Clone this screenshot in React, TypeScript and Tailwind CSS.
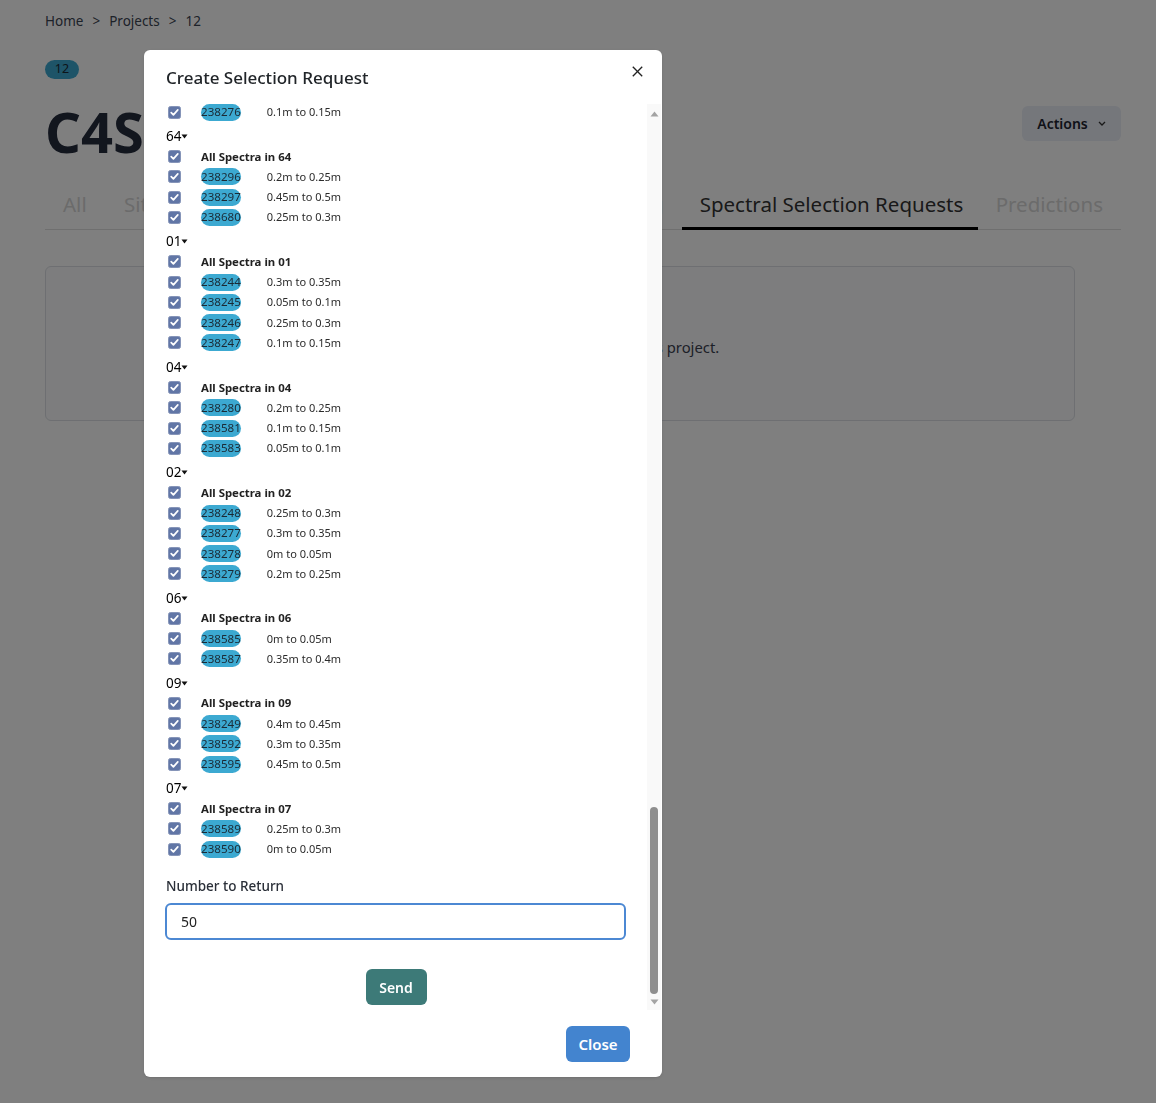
import React from "react";

type Item = [string, string];
type Group = { label: string | null; items: Item[] };

const groups: Group[] = [
  { label: null, items: [["238276", "0.1m to 0.15m"]] },
  { label: "64", items: [["238296", "0.2m to 0.25m"], ["238297", "0.45m to 0.5m"], ["238680", "0.25m to 0.3m"]] },
  { label: "01", items: [["238244", "0.3m to 0.35m"], ["238245", "0.05m to 0.1m"], ["238246", "0.25m to 0.3m"], ["238247", "0.1m to 0.15m"]] },
  { label: "04", items: [["238280", "0.2m to 0.25m"], ["238581", "0.1m to 0.15m"], ["238583", "0.05m to 0.1m"]] },
  { label: "02", items: [["238248", "0.25m to 0.3m"], ["238277", "0.3m to 0.35m"], ["238278", "0m to 0.05m"], ["238279", "0.2m to 0.25m"]] },
  { label: "06", items: [["238585", "0m to 0.05m"], ["238587", "0.35m to 0.4m"]] },
  { label: "09", items: [["238249", "0.4m to 0.45m"], ["238592", "0.3m to 0.35m"], ["238595", "0.45m to 0.5m"]] },
  { label: "07", items: [["238589", "0.25m to 0.3m"], ["238590", "0m to 0.05m"]] },
];

function Check() {
  return (
    <svg width="13" height="13" viewBox="0 0 13 13" className="shrink-0">
      <rect x="0.5" y="0.5" width="12" height="12" rx="2" fill="#6176a6" stroke="#8594b8" />
      <polyline points="3.2,6.6 5.4,8.9 9.8,3.9" fill="none" stroke="#fff" strokeWidth="1.7" strokeLinecap="round" strokeLinejoin="round" />
    </svg>
  );
}

function Row({ id, range }: { id: string; range: string }) {
  return (
    <div className="flex h-[20.25px] items-center pl-[2px]">
      <Check />
      <span className="ml-[20px] inline-flex h-[17px] items-center rounded-full bg-[#3ca9d1] text-[11.6px] leading-[14px] text-[#1b2a35]">{id}</span>
      <span className="ml-[26px] inline-block text-[11px] leading-[14px] text-[#2b2b2b]">{range}</span>
    </div>
  );
}

function AllRow({ label }: { label: string }) {
  return (
    <div className="flex h-[20.25px] items-center pl-[2px]">
      <Check />
      <span className="ml-[20px] text-[11.4px] font-bold leading-[14px] text-[#222]">All Spectra in {label}</span>
    </div>
  );
}

function GroupLabel({ label }: { label: string }) {
  return (
    <div className="flex h-[24.3px] items-center pt-[3px] text-[13.5px] leading-[18px] text-black">
      <span>{label}</span>
      <svg width="7" height="5" viewBox="0 0 7 5" className="mt-[1px]">
        <polygon points="0.5,0.5 6.5,0.5 3.5,4.5" fill="#111" />
      </svg>
    </div>
  );
}

const tabBase = "-mb-px border-b-[3px] px-[18px] pb-[8px] whitespace-nowrap";

export default function App() {
  const font = { fontFamily: '"Noto Sans", "Open Sans", Arial, sans-serif' };
  return (
    <div className="relative min-h-[1103px] w-full bg-white text-[#212529]" style={font}>
      {/* Background page */}
      <div className="pl-[45px] pr-[35px] pt-[12px]">
        <div className="flex items-center gap-[9px] text-[13.5px] leading-[18px] text-[#3b4452]">
          <span>Home</span>
          <span>&gt;</span>
          <span>Projects</span>
          <span>&gt;</span>
          <span>12</span>
        </div>
        <div className="mt-[30px] flex h-[19px] w-[34px] items-center justify-center rounded-full bg-[#3ca9d1] text-[12.5px] text-[#1b2a35]">
          12
        </div>
        <div className="mt-[17px] flex items-start justify-between">
          <h1 className="text-[56px] font-bold leading-[70px] text-[#252c3d]">C4S</h1>
          <button className="mt-[10px] flex h-[35px] w-[99px] items-center justify-center gap-[10px] rounded-md bg-[#eaeef6] text-[14px] font-semibold text-[#1f2430]">
            Actions
            <svg width="8" height="5" viewBox="0 0 8 5"><polyline points="1,1 4,4 7,1" fill="none" stroke="#333" strokeWidth="1.3" /></svg>
          </button>
        </div>
        <div className="mt-[23px] flex border-b border-[#dedede] text-[20.5px] leading-[30px]">
          <div className={`${tabBase} w-[61px] border-transparent text-[#d6d6d6]`}>All</div>
          <div className="flex w-[577px]">
            <div className={`${tabBase} border-transparent text-[#d6d6d6]`}>Sites</div>
            <div className={`${tabBase} border-transparent text-[#d6d6d6]`}>Spectra</div>
            <div className={`${tabBase} flex-1 border-transparent text-right text-[#d6d6d6]`}>Sampling</div>
          </div>
          <div className={`${tabBase} w-[296px] border-black text-[#333]`}>Spectral Selection Requests</div>
          <div className={`${tabBase} border-transparent text-[#d6d6d6]`}>Predictions</div>
        </div>
        <div className="mr-[46px] mt-[36px] flex h-[155px] items-center justify-center rounded-md border border-[#dcdfe4] bg-[#fafbfd] pt-[8px] text-[14.8px] text-[#3a4150]">
          No spectral selection requests for this project.
        </div>
      </div>

      {/* Overlay */}
      <div className="fixed inset-0 bg-black/50" />

      {/* Modal */}
      <div className="absolute left-[144px] top-[50px] w-[518px] rounded-md bg-white shadow-sm">
        <div className="relative h-[52px] pl-[22px] pt-[16px]">
          <h2 className="text-[17px] font-medium leading-[24px] text-[#212529]">Create Selection Request</h2>
          <button className="absolute right-[19px] top-[15px] flex h-[12px] w-[12px] items-center justify-center">
            <svg width="11" height="11" viewBox="0 0 11 11">
              <line x1="0.8" y1="0.8" x2="10.2" y2="10.2" stroke="#222" strokeWidth="1.3" />
              <line x1="10.2" y1="0.8" x2="0.8" y2="10.2" stroke="#222" strokeWidth="1.3" />
            </svg>
          </button>
        </div>

        <div className="flex h-[908px] overflow-hidden pl-[22px]">
          <div className="w-[460px]">
            {groups.map((g, gi) => (
              <div key={gi}>
                {g.label && <GroupLabel label={g.label} />}
                {g.label && <AllRow label={g.label} />}
                {g.items.map(([id, r]) => (
                  <Row key={id} id={id} range={r} />
                ))}
              </div>
            ))}
            <label className="mt-[17px] block text-[13.5px] font-medium leading-[20px] text-[#2a2f38]">Number to Return</label>
            <div className="-ml-px mt-[7px] flex h-[37px] w-[461px] items-center rounded-md border-2 border-[#4c88d3] pl-[14px] text-[14px] text-[#222]">
              50
            </div>
            <div className="mt-[29px] flex justify-center">
              <button className="h-[36px] w-[61px] rounded-md bg-[#3d7a78] text-[14px] font-semibold text-white">Send</button>
            </div>
          </div>
          <div className="ml-[21px] mt-[2px] flex w-[14px] flex-col items-center bg-[#f9f9f9]">
            <svg width="9" height="6" viewBox="0 0 9 6" className="mt-[7px]">
              <polygon points="0.5,5.5 8.5,5.5 4.5,0.5" fill="#a3a3a3" />
            </svg>
            <div className="flex-1" />
            <div className="h-[187px] w-[8px] rounded-full bg-[#8e8e8e]" />
            <svg width="9" height="6" viewBox="0 0 9 6" className="mb-[5px] mt-[5px]">
              <polygon points="0.5,0.5 8.5,0.5 4.5,5.5" fill="#a3a3a3" />
            </svg>
          </div>
        </div>

        <div className="flex justify-end pb-[15px] pr-[32px] pt-[16px]">
          <button className="h-[36px] w-[64px] rounded-md bg-[#4384cf] text-[15px] font-semibold text-white">Close</button>
        </div>
      </div>
    </div>
  );
}
